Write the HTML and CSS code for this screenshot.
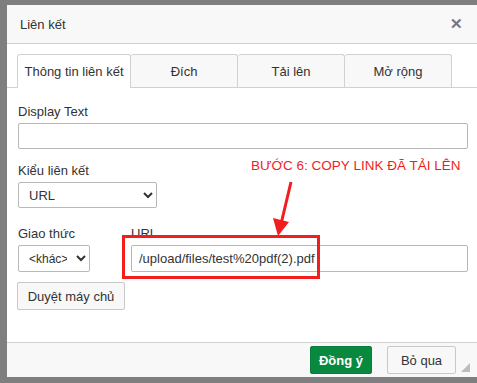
FILE: index.html
```html
<!DOCTYPE html>
<html lang="vi">
<head>
    <meta charset="UTF-8">
    <title>Liên kết</title>
    <link rel="stylesheet" href="styles.css">
</head>
<body>
    <div class="dialog">
        <div class="dialog-header">
            <span class="dialog-title">Liên kết</span>
            <span class="close">&#x2715;</span>
        </div>
        <div class="tabs">
            <div class="tab active">Thông tin liên kết</div>
            <div class="tab">Đích</div>
            <div class="tab">Tải lên</div>
            <div class="tab">Mở rộng</div>
        </div>
        <div class="dialog-body">
            <label class="field-label">Display Text</label>
            <input class="text-input" type="text">

            <label class="field-label">Kiểu liên kết</label>
            <select class="select select-type">
                <option>URL</option>
            </select>

            <div class="url-row">
                <div>
                    <label class="field-label">Giao thức</label>
                    <select class="select select-protocol">
                        <option>&lt;khác&gt;</option>
                    </select>
                </div>
                <div>
                    <label class="field-label">URL</label>
                    <input class="text-input" type="text" value="/upload/files/test%20pdf(2).pdf">
                </div>
            </div>

            <button class="btn btn-browse">Duyệt máy chủ</button>

            <!-- annotation drawn on top of the screenshot -->
            <div class="note">BƯỚC 6: COPY LINK ĐÃ TẢI LÊN</div>
            <svg class="note-arrow" width="40" height="60" viewBox="0 0 40 60">
                <line x1="30" y1="2" x2="20" y2="44" stroke="#f21d1d" stroke-width="3"/>
                <polygon points="12,38 28,42 17,56" fill="#f21d1d"/>
            </svg>
            <div class="note-box"></div>
        </div>
        <div class="dialog-footer">
            <button class="btn btn-ok">Đồng ý</button>
            <button class="btn btn-cancel">Bỏ qua</button>
            <svg class="grip" width="9" height="9" viewBox="0 0 9 9">
                <polygon points="9,0 9,9 0,9" fill="#bdbdbd"/>
            </svg>
        </div>
    </div>
</body>
</html>
```

FILE: styles.css
```css
body {
    margin: 0;
    background-color: #7f7f7f;
    font-family: "Liberation Sans", Arial, sans-serif;
    font-size: 13px;
    color: #333;
    height: 383px;
    overflow: hidden;
}
.dialog {
    margin: 5px 0 0 7px;
    background: white;
    height: 372px;
    display: flex;
    flex-direction: column;
}
.dialog-header {
    height: 38px;
    background: #f8f8f8;
    border-bottom: 1px solid #d1d1d1;
    display: flex;
    align-items: center;
    justify-content: space-between;
    padding: 0 14px 0 13px;
}
.dialog-title {
    font-size: 13px;
    color: #333;
}
.close {
    font-size: 15px;
    font-weight: bold;
    color: #777;
}
.tabs {
    display: flex;
    padding: 10px 0 0 10px;
    border-bottom: 1px solid #d1d1d1;
}
.tab {
    height: 33px;
    width: 107px;
    box-sizing: border-box;
    border: 1px solid #d1d1d1;
    border-bottom: none;
    border-left: none;
    border-radius: 3px 3px 0 0;
    background: #f8f8f8;
    display: flex;
    align-items: center;
    justify-content: center;
    margin-bottom: -1px;
}
.tab.active {
    width: 114px;
    border-left: 1px solid #d1d1d1;
    background: white;
    height: 34px;
}
.dialog-body {
    position: relative;
    flex: 1;
    padding: 16px 9px 0 11px;
}
.field-label {
    display: block;
    line-height: 16px;
    margin-bottom: 3px;
}
.text-input {
    display: block;
    width: 100%;
    height: 26px;
    box-sizing: border-box;
    border: 1px solid #b8b8b8;
    border-radius: 2px;
    padding: 0 7px;
    font-family: inherit;
    font-size: 13px;
    color: #333;
    margin-bottom: 14px;
}
.select {
    display: block;
    height: 26px;
    box-sizing: border-box;
    border: 1px solid #b8b8b8;
    border-radius: 2px;
    background: white;
    font-family: inherit;
    font-size: 13px;
    color: #333;
    padding: 0 6px;
}
.select-type {
    width: 139px;
    margin-bottom: 18px;
}
.select-protocol {
    width: 72px;
    height: 27px;
    font-size: 12px;
}
.url-row {
    display: grid;
    grid-template-columns: 113px 1fr;
}
.url-row .text-input {
    height: 27px;
    margin-bottom: 0;
}
.btn {
    font-family: inherit;
    font-size: 13px;
    border-radius: 2px;
    box-sizing: border-box;
    cursor: pointer;
}
.btn-browse {
    margin-top: 10px;
    height: 28px;
    width: 108px;
    background: #f8f8f8;
    border: 1px solid #c8c8c8;
    color: #333;
    margin-left: -1px;
}
.note {
    position: absolute;
    left: 244px;
    top: 70px;
    color: #f21d1d;
    font-size: 13.5px;
    white-space: nowrap;
}
.note-arrow {
    position: absolute;
    left: 254px;
    top: 92px;
}
.note-box {
    position: absolute;
    left: 115px;
    top: 147px;
    width: 198px;
    height: 44px;
    box-sizing: border-box;
    border: 3px solid #f21d1d;
}
.dialog-footer {
    height: 34px;
    background: #f8f8f8;
    border-top: 1px solid #d1d1d1;
    display: flex;
    align-items: center;
    justify-content: flex-end;
    gap: 15px;
    padding-right: 21px;
    position: relative;
}
.btn-ok {
    height: 28px;
    width: 62px;
    background: #08893f;
    border: 1px solid #07803a;
    color: white;
    font-weight: bold;
}
.btn-cancel {
    height: 28px;
    width: 69px;
    background: #f8f8f8;
    border: 1px solid #c8c8c8;
    color: #333;
}
.grip {
    position: absolute;
    right: 7px;
    bottom: 5px;
}
```
